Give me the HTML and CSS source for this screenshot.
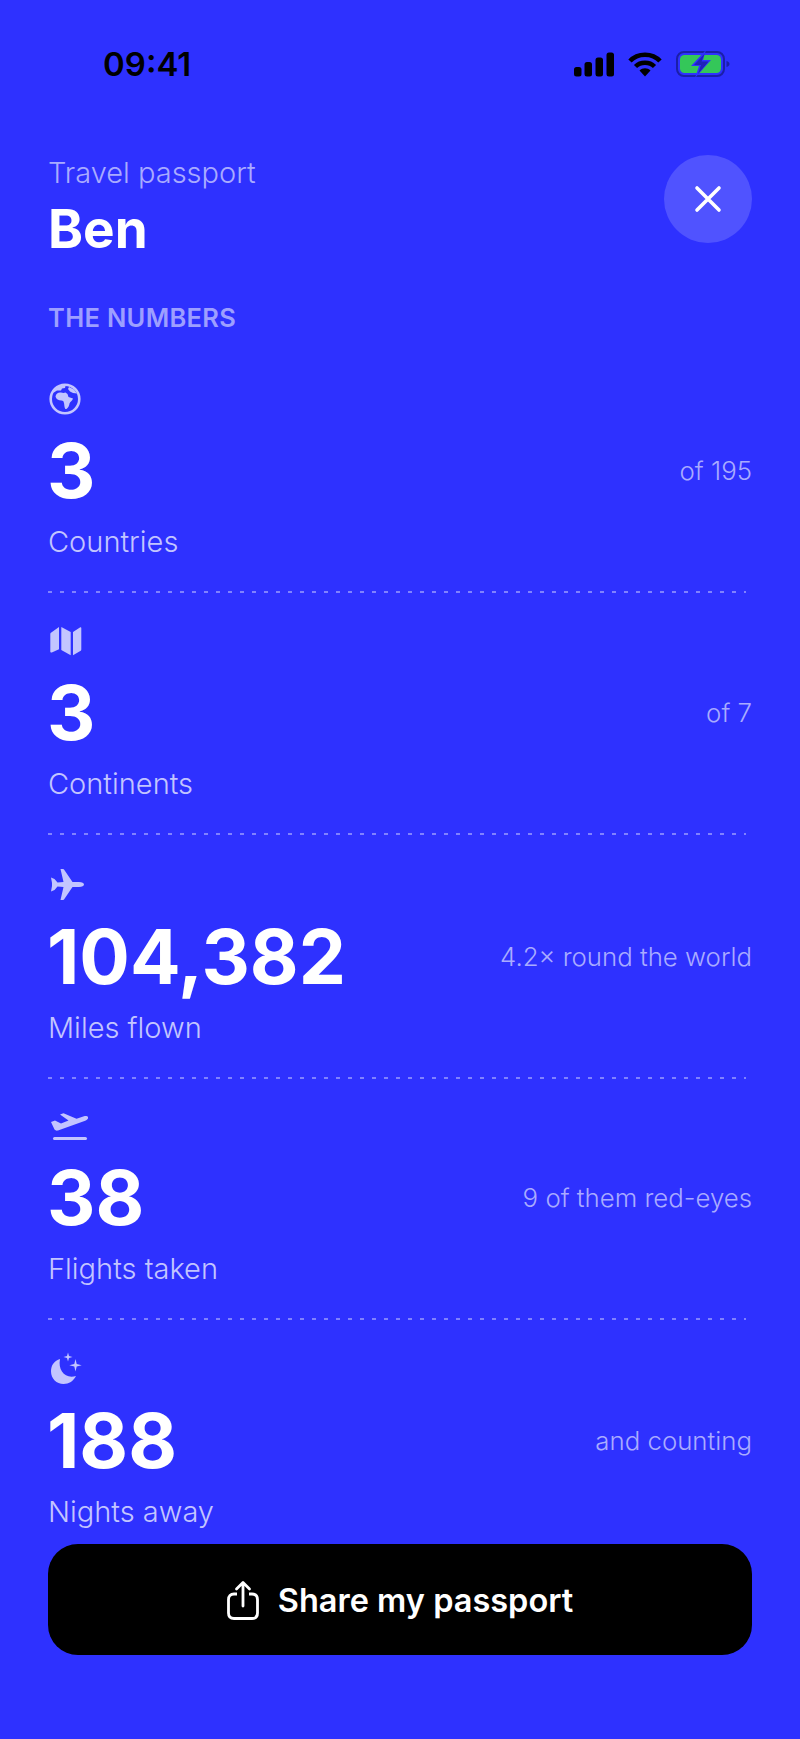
FILE: index.html
```html
<!DOCTYPE html>
<html lang="en">
<head>
    <meta charset="UTF-8">
    <meta name="viewport" content="width=device-width, initial-scale=1.0">
    <title>Travel passport</title>
    <link rel="stylesheet" href="styles.css">
</head>
<body>
    <div class="screen">
        <!-- Status bar -->
        <div class="status-bar">
            <span class="clock">09:41</span>
            <div class="status-icons">
                <svg width="40" height="25" viewBox="0 0 40 25">
                    <rect x="0" y="15" width="7.500" height="9.500" rx="2.500"/>
                    <rect x="10.500" y="10" width="7.500" height="14.500" rx="2.500"/>
                    <rect x="21.500" y="5.500" width="7.500" height="19" rx="2.500"/>
                    <rect x="32.500" y="0.500" width="7.500" height="24" rx="2.500"/>
                </svg>
                <svg width="34" height="25" viewBox="0 0 34 25">
                    <path d="M17 24.500 11.500 18.500C14.500 15.500 19.500 15.500 22.500 18.500Z"/>
                    <path d="M7.500 14.500C12.500 9.500 21.500 9.500 26.500 14.500" fill="none" stroke="#000" stroke-width="4.500"/>
                    <path d="M2 9C9.500 0.500 24.500 0.500 32 9" fill="none" stroke="#000" stroke-width="4.500"/>
                </svg>
                <svg width="54" height="26" viewBox="0 0 54 26">
                    <rect x="1" y="1" width="47" height="24" rx="7" fill="none" stroke="#1b1fa8" stroke-width="2"/>
                    <rect x="4" y="4" width="41" height="18" rx="4.500" fill="#34c759"/>
                    <path d="M50.500 10c2 .5 3 1.800 3 3s-1 2.500-3 3z" fill="#1b1fa8"/>
                    <path d="M30 -1 15 15h8l-4 12 16-18h-8z" fill="#2e31ff"/>
                    <path d="M28.500 3 18 14h7l-3 9 10.500-12.500h-7z" fill="#1f23b8"/>
                </svg>
            </div>
        </div>

        <!-- Title and close -->
        <div class="header">
            <div>
                <div class="eyebrow">Travel passport</div>
                <div class="name">Ben</div>
            </div>
            <button class="close-button">
                <svg width="30" height="30" viewBox="0 0 30 30">
                    <path d="M4 4 26 26M26 4 4 26" stroke="#fff" stroke-width="3.600" stroke-linecap="round"/>
                </svg>
            </button>
        </div>

        <div class="section-title">THE NUMBERS</div>

        <div class="stats">
            <div class="stat">
                <svg class="stat-icon" width="34" height="34" viewBox="0 0 34 34">
                    <circle cx="17" cy="17" r="14.300" fill="none" stroke="#c3c5ff" stroke-width="2.600"/>
                    <path d="M7.500 14.500C8 11.500 10.500 10 13 10.500l2.500.5 2-.5 2 1.500 1 3 4.500 1.500c-.5 2-3 3.500-3.500 5-.3 2-1 4.200-3 5.500h-1.200c-1.300-2-.8-5-1.500-6.500-.3-1.500-1-1.800-2.300-1.900-3-.3-5.500-1.500-6-4.100z" fill="#c3c5ff"/>
                    <path d="M5 11C6.500 7.500 9.500 4.500 13.500 3.500l4 .5-.5 2-3 .5-1 2-4 0zM21 5l5 2.500 3 4-4-.5-3-1.500-2-2.500z" fill="#c3c5ff"/>
                </svg>
                <div class="stat-line">
                    <span class="stat-number">3</span>
                    <span class="stat-note">of 195</span>
                </div>
                <div class="stat-label">Countries</div>
            </div>

            <div class="stat">
                <svg class="stat-icon" width="34" height="34" viewBox="0 0 34 34">
                    <path d="M2.300 10c0-.7.400-1.200 1-1.500L11 3v22.300l-7.200 3.200c-.7.300-1.500 0-1.500-1z" fill="#c3c5ff"/>
                    <path d="M13.300 3l9.400 5v23.300l-9.400-5.300z" fill="#c3c5ff"/>
                    <path d="M25 8l7.300-4.700c.5-.3 1 0 1 .7V25.500c0 .7-.4 1.200-1 1.500L25 31.300z" fill="#c3c5ff"/>
                </svg>
                <div class="stat-line">
                    <span class="stat-number">3</span>
                    <span class="stat-note">of 7</span>
                </div>
                <div class="stat-label">Continents</div>
            </div>

            <div class="stat">
                <svg class="stat-icon" width="38" height="34" viewBox="0 0 38 34">
                    <path d="M36 16.500c0-1.500-2-2.500-5-2.500h-6.500L16 1.500C15.500 1 15 1 14 1h-1.500l3 13-6 .5-3-3.500-3.500-1.500 1 5.500v3l-1 5.500 3.500-1.500 3-3.500 6 .5-3 13H14c1 0 1.500 0 2-.5L24.500 19H31c3 0 5-1 5-2.500z" fill="#c3c5ff"/>
                </svg>
                <div class="stat-line">
                    <span class="stat-number">104,382</span>
                    <span class="stat-note">4.2× round the world</span>
                </div>
                <div class="stat-label">Miles flown</div>
            </div>

            <div class="stat">
                <svg class="stat-icon" width="40" height="34" viewBox="-1 0 40 34">
                    <path d="M2 13 6 11.500l6 3 7.500-3L11 5.500l3.500-1.300 13 5.500 7.500-2.500c2-.6 4 0 4.200 1.300.2 1.200-1 2.500-3 3.200L9 21.500c-1.500.4-2.700 0-3.500-1z" fill="#c3c5ff"/>
                    <rect x="4" y="28" width="34" height="3" rx="1.500" fill="#c3c5ff"/>
                </svg>
                <div class="stat-line">
                    <span class="stat-number">38</span>
                    <span class="stat-note">9 of them red-eyes</span>
                </div>
                <div class="stat-label">Flights taken</div>
            </div>

            <div class="stat">
                <svg class="stat-icon" width="34" height="34" viewBox="0 0 34 34">
                    <path d="M12 7C6.500 8.500 3 13 3 19.500 3 26.500 8.500 32 15.500 32c5.500 0 10-3 12.500-8-1.500.5-3 .7-4.500.7C15.500 24.700 10 17 12 7z" fill="#c3c5ff"/>
                    <path d="M20 .5l1 3.500 3.500 1-3.500 1-1 3.500-1-3.500-3.500-1 3.500-1zM27.500 7l1.200 5 5 1.200-5 1.200-1.200 5-1.200-5-5-1.200 5-1.200z" fill="#c3c5ff"/>
                </svg>
                <div class="stat-line">
                    <span class="stat-number">188</span>
                    <span class="stat-note">and counting</span>
                </div>
                <div class="stat-label">Nights away</div>
            </div>
        </div>

        <button class="share-button">
            <svg width="32" height="40" viewBox="0 0 32 40">
                <path d="M10 14H7c-3.500 0-5.500 2-5.500 5.500V33c0 3.500 2 5.500 5.500 5.500h18c3.500 0 5.500-2 5.500-5.500V19.500c0-3.500-2-5.500-5.500-5.500h-3" fill="none" stroke="#fff" stroke-width="2.800"/>
                <path d="M16 26V3M9.500 9 16 2.500 22.500 9" fill="none" stroke="#fff" stroke-width="2.800" stroke-linecap="round" stroke-linejoin="round"/>
            </svg>
            <span>Share my passport</span>
        </button>
    </div>
</body>
</html>
```

FILE: styles.css
```css
* {
    box-sizing: border-box;
}

body {
    margin: 0;
    background-color: #2e31ff;
    font-family: Inter, "Liberation Sans", sans-serif;
}

.screen {
    height: 1739px;
    padding: 0 48px 84px;
    overflow: hidden;
    display: flex;
    flex-direction: column;
}

/* Status bar */
.status-bar {
    height: 128px;
    flex: none;
    display: flex;
    align-items: center;
    justify-content: space-between;
    padding-left: 55px;
    padding-right: 22px;
}

.clock {
    font-size: 33px;
    font-weight: 600;
    color: #000;
}

.status-icons {
    display: flex;
    align-items: center;
    gap: 14px;
}

/* Header */
.header {
    display: flex;
    justify-content: space-between;
    align-items: flex-start;
    padding-top: 27px;
    height: 174px;
    flex: none;
}

.eyebrow {
    font-size: 29px;
    line-height: 36px;
    font-weight: 300;
    color: #a9abff;
}

.name {
    font-size: 53px;
    line-height: 64px;
    font-weight: 700;
    color: #fff;
    margin-top: 6px;
}

.close-button {
    width: 88px;
    height: 88px;
    border: none;
    border-radius: 50%;
    background-color: #5053ff;
    display: flex;
    align-items: center;
    justify-content: center;
    padding: 0;
}

.section-title {
    font-size: 25.500px;
    line-height: 32px;
    font-weight: 600;
    color: #9d9fff;
    letter-spacing: 0.3px;
}

/* Stat rows */
.stats {
    margin-top: 48px;
    flex: none;
}

.stat {
    height: 242px;
    background-image: repeating-linear-gradient(to right, #8082ff 0 4px, transparent 4px 12px);
    background-size: 698px 2px;
    background-repeat: no-repeat;
    background-position: left 0 top 209px;
}

.stat:nth-child(2) {
    height: 244px;
}

.stat:nth-child(3) {
    height: 241px;
}

.stat:nth-child(4) {
    height: 243px;
}

.stat:last-child {
    height: 160px;
    background-image: none;
}

.stat-icon {
    display: block;
    height: 34px;
}

.stat-line {
    display: flex;
    justify-content: space-between;
    align-items: center;
    height: 90px;
    margin-top: 9px;
}

.stat-number {
    font-size: 75px;
    font-weight: 700;
    color: #fff;
    margin-left: -1px;
}

.stat-note {
    font-size: 25.800px;
    font-weight: 300;
    color: #a9abff;
}

.stat-label {
    font-size: 29px;
    line-height: 36px;
    font-weight: 300;
    margin-top: 9px;
    color: #c3c5ff;
}

/* Share button */
.share-button {
    flex: none;
    margin-top: auto;
    width: 704px;
    height: 111px;
    border: none;
    border-radius: 30px;
    padding-top: 2px;
    background-color: #000;
    color: #fff;
    font-family: inherit;
    font-size: 32.500px;
    font-weight: 600;
    display: flex;
    align-items: center;
    justify-content: center;
    gap: 19px;
}
```
